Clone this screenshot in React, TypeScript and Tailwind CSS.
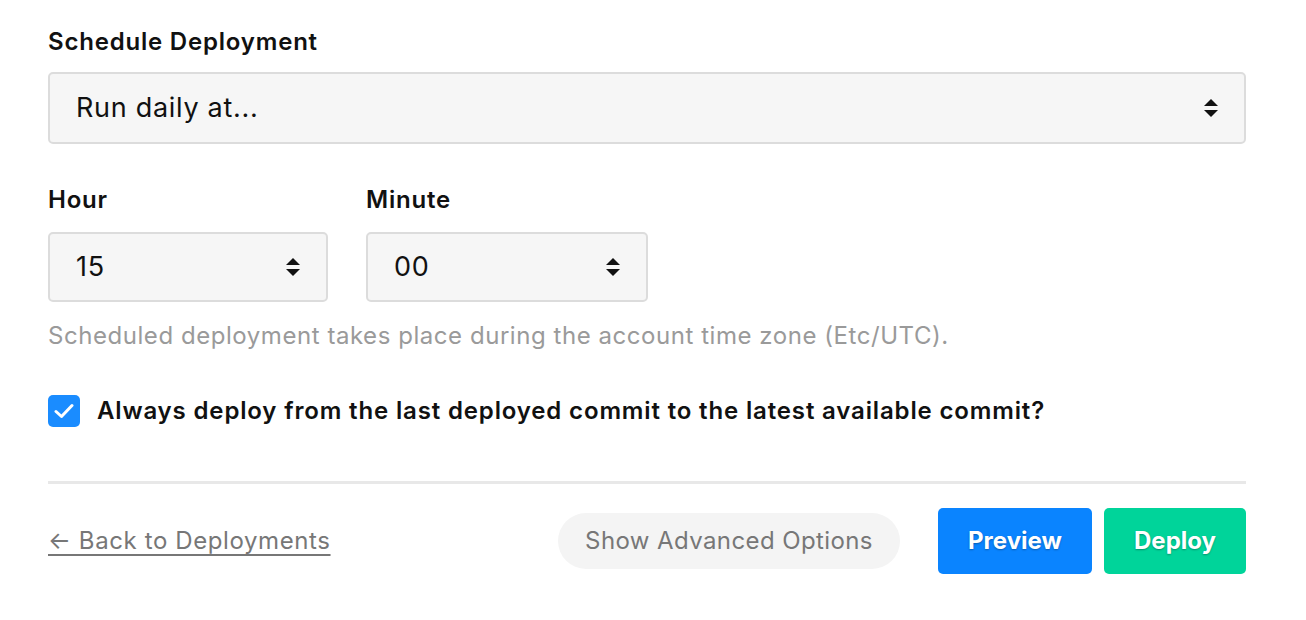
import React from "react";

function Arrows() {
  return (
    <svg width="14" height="20" viewBox="0 0 14 20" className="shrink-0">
      <path d="M7 1 L14 8 L0 8 Z" fill="#111" />
      <path d="M0 12 L14 12 L7 19 Z" fill="#111" />
    </svg>
  );
}

function FakeSelect({ value, className }: { value: string; className: string }) {
  return (
    <div className={`flex items-center justify-between rounded-[5px] border-2 border-[#dcdcdc] bg-[#f6f6f6] pl-[26px] pr-[26px] text-[27px] tracking-[0.7px] text-[#111] ${className}`}>
      <span>{value}</span>
      <Arrows />
    </div>
  );
}

export default function App() {
  return (
    <div className="min-h-[620px] w-[1306px] bg-white pl-[48px] pt-[26px] font-['Inter',sans-serif] text-[#111]">
      <div className="w-[1198px]">
        <div className="text-[24px] font-semibold leading-[32px] tracking-[0.8px]">Schedule Deployment</div>
        <FakeSelect value="Run daily at..." className="mt-[14px] h-[72px] w-[1198px]" />

        <div className="mt-[40px] flex gap-[38px]">
          <div className="w-[280px]">
            <div className="text-[24px] font-semibold leading-[32px] tracking-[0.8px]">Hour</div>
            <FakeSelect value="15" className="mt-[16px] h-[70px] w-[280px]" />
          </div>
          <div className="w-[282px]">
            <div className="text-[24px] font-semibold leading-[32px] tracking-[0.8px]">Minute</div>
            <FakeSelect value="00" className="mt-[16px] h-[70px] w-[282px]" />
          </div>
        </div>

        <div className="mt-[18px] text-[24px] leading-[32px] tracking-[0.55px] text-[#9a9a9a]">
          Scheduled deployment takes place during the account time zone (Etc/UTC).
        </div>

        <div className="mt-[41px] flex items-center gap-[17px]">
          <div className="flex h-[32px] w-[32px] items-center justify-center rounded-[5px] bg-[#1a8cff]">
            <svg width="20" height="16" viewBox="0 0 20 16">
              <path d="M2 8.5 L7.5 13.5 L18 2.5" fill="none" stroke="#fff" strokeWidth="3" strokeLinecap="round" strokeLinejoin="round" />
            </svg>
          </div>
          <span className="text-[24px] font-semibold tracking-[0.85px]">
            Always deploy from the last deployed commit to the latest available commit?
          </span>
        </div>

        <div className="mt-[52px] h-[3px] w-[1198px] bg-[#e8e8e8]" />

        <div className="mt-[24px] flex h-[66px] items-center justify-between">
          <a href="#" className="text-[24px] tracking-[0.6px] text-[#777] underline decoration-[2px] underline-offset-[5px]">
            ← Back to Deployments
          </a>
          <div className="flex items-center">
            <button className="h-[56px] w-[342px] rounded-full bg-[#f4f4f4] text-[24px] tracking-[0.4px] text-[#777]">
              Show Advanced Options
            </button>
            <button className="ml-[38px] h-[66px] w-[154px] rounded-[5px] bg-[#0a84ff] text-[24px] font-bold text-white [text-shadow:0_1px_2px_rgba(0,0,0,0.3)]">
              Preview
            </button>
            <button className="ml-[12px] h-[66px] w-[142px] rounded-[5px] bg-[#00d49a] text-[24px] font-bold text-white [text-shadow:0_1px_2px_rgba(0,0,0,0.3)]">
              Deploy
            </button>
          </div>
        </div>
      </div>
    </div>
  );
}
